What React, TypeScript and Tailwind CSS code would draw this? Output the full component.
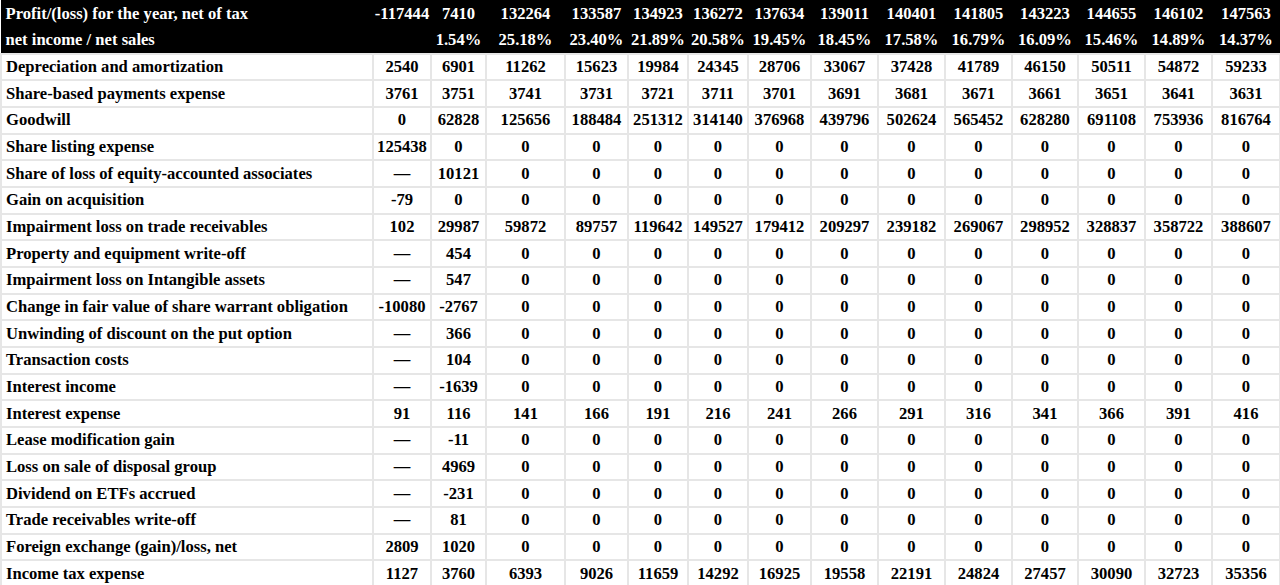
const widths = ['w-[372px]', 'w-[58px]', 'w-[55px]', 'w-[79px]', 'w-[63px]', 'w-[60px]', 'w-[60px]', 'w-[63px]', 'w-[67px]', 'w-[67px]', 'w-[67px]', 'w-[66px]', 'w-[67px]', 'w-[67px]', 'w-[68px]'];

const zeros = (first: string, second: string) => [first, second, ...Array(12).fill('0')];

const header: [string, string[]][] = [
  ['Profit/(loss) for the year, net of tax', ['-117444', '7410', '132264', '133587', '134923', '136272', '137634', '139011', '140401', '141805', '143223', '144655', '146102', '147563']],
  ['net income / net sales', ['', '1.54%', '25.18%', '23.40%', '21.89%', '20.58%', '19.45%', '18.45%', '17.58%', '16.79%', '16.09%', '15.46%', '14.89%', '14.37%']],
];

const rows: [string, string[]][] = [
  ['Depreciation and amortization', ['2540', '6901', '11262', '15623', '19984', '24345', '28706', '33067', '37428', '41789', '46150', '50511', '54872', '59233']],
  ['Share-based payments expense', ['3761', '3751', '3741', '3731', '3721', '3711', '3701', '3691', '3681', '3671', '3661', '3651', '3641', '3631']],
  ['Goodwill', ['0', '62828', '125656', '188484', '251312', '314140', '376968', '439796', '502624', '565452', '628280', '691108', '753936', '816764']],
  ['Share listing expense', zeros('125438', '0')],
  ['Share of loss of equity-accounted associates', zeros('—', '10121')],
  ['Gain on acquisition', zeros('-79', '0')],
  ['Impairment loss on trade receivables', ['102', '29987', '59872', '89757', '119642', '149527', '179412', '209297', '239182', '269067', '298952', '328837', '358722', '388607']],
  ['Property and equipment write-off', zeros('—', '454')],
  ['Impairment loss on Intangible assets', zeros('—', '547')],
  ['Change in fair value of share warrant obligation', zeros('-10080', '-2767')],
  ['Unwinding of discount on the put option', zeros('—', '366')],
  ['Transaction costs', zeros('—', '104')],
  ['Interest income', zeros('—', '-1639')],
  ['Interest expense', ['91', '116', '141', '166', '191', '216', '241', '266', '291', '316', '341', '366', '391', '416']],
  ['Lease modification gain', zeros('—', '-11')],
  ['Loss on sale of disposal group', zeros('—', '4969')],
  ['Dividend on ETFs accrued', zeros('—', '-231')],
  ['Trade receivables write-off', zeros('—', '81')],
  ['Foreign exchange (gain)/loss, net', zeros('2809', '1020')],
  ['Income tax expense', ['1127', '3760', '6393', '9026', '11659', '14292', '16925', '19558', '22191', '24824', '27457', '30090', '32723', '35356']],
];

export default function App() {
  return (
    <div className="bg-white font-['Liberation_Serif','Times_New_Roman',serif] text-[16.6px] leading-[20px] font-bold text-black">
      <table className="w-[1280px] table-fixed border-collapse">
        <colgroup>
          {widths.map((w, i) => (
            <col key={i} className={w} />
          ))}
        </colgroup>
        <tbody>
          {header.map(([label, values]) => (
            <tr key={label} className="h-[26.67px] bg-black text-white">
              <td className="border border-black px-1 text-left whitespace-nowrap">{label}</td>
              {values.map((v, i) => (
                <td key={i} className="border border-black text-center whitespace-nowrap">{v}</td>
              ))}
            </tr>
          ))}
          {rows.map(([label, values]) => (
            <tr key={label} className="h-[26.67px]">
              <td className="border-2 border-[#e6e6e6] px-1 text-left whitespace-nowrap">{label}</td>
              {values.map((v, i) => (
                <td key={i} className="border-2 border-[#e6e6e6] text-center whitespace-nowrap">{v}</td>
              ))}
            </tr>
          ))}
        </tbody>
      </table>
    </div>
  );
}
